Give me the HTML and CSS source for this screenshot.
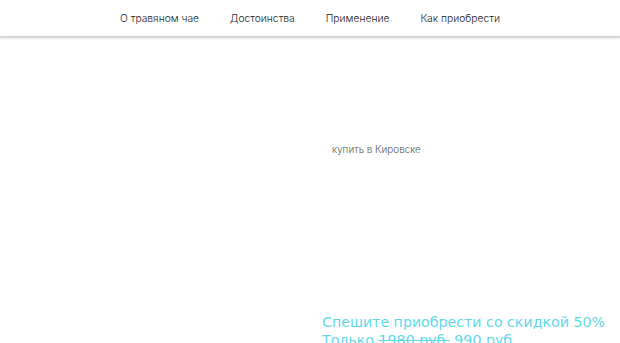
FILE: index.html
```html
<!DOCTYPE html>
<html lang="ru">
<head>
<meta charset="utf-8">
<link rel="stylesheet" href="styles.css">
</head>
<body>
<header class="topbar">
  <nav class="menu">
    <a href="#">О травяном чае</a>
    <a href="#">Достоинства</a>
    <a href="#">Применение</a>
    <a href="#">Как приобрести</a>
  </nav>
</header>
<main class="hero">
  <div class="hero-left"></div>
  <div class="hero-right">
    <p class="buy">купить в Кировске</p>
    <div class="offer">
      <p class="offer-line">Спешите приобрести со скидкой 50%</p>
      <p class="offer-line">Только <s>1980 руб.</s> 990 руб.</p>
    </div>
  </div>
</main>
</body>
</html>
```
FILE: styles.css
```css
html, body { margin: 0; padding: 0; background: #fff; }
body { font-family: "Inter", sans-serif; overflow: hidden; height: 343px; }
.topbar {
  height: 36px;
  border-bottom: 2px solid #d6d6d6;
  box-shadow: 0 1px 2px rgba(0,0,0,0.08);
  display: flex;
  justify-content: center;
  align-items: center;
}
.menu { display: flex; gap: 31px; }
.menu a { color: #222; text-decoration: none; font-size: 10.3px; font-weight: 300; }
.hero { display: grid; grid-template-columns: 310px 310px; }
.hero-right { padding-left: 12px; }
.buy {
  margin: 105px 0 0 10px;
  font-family: "Inter", sans-serif;
  font-weight: 300;
  font-size: 9.9px;
  color: #555;
}
.offer { margin-top: 158px; }
.offer-line {
  margin: 0;
  font-family: "DejaVu Sans", sans-serif;
  font-size: 14.2px;
  line-height: 18px;
  color: #5fd9e8;
}
```
